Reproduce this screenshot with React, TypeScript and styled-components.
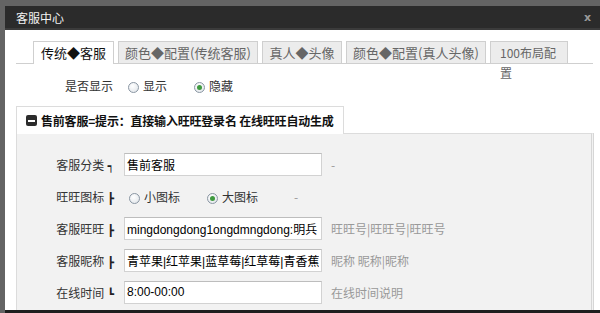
import React from 'react';
import styled, { createGlobalStyle } from 'styled-components';

const GlobalStyle = createGlobalStyle`
	html, body {
		margin: 0;
		padding: 0;
		background: #646464;
		overflow: hidden;
	}
	* {
		box-sizing: border-box;
	}
`;

const cjk = `"Noto Sans CJK SC", "Liberation Sans", sans-serif`;

const Frame = styled.div`
	width: 600px;
	height: 313px;
	padding: 6px 0 0 5px;
	background: #646464;
	display: flex;
	flex-direction: column;
	font-family: ${cjk};
	font-size: 12px;
`;

const TitleBar = styled.div`
	height: 24px;
	flex: none;
	display: flex;
	align-items: center;
	justify-content: space-between;
	padding: 0 9px 0 11px;
	background: #2b2b2b;
	border-bottom: 2px solid #3b3b3b;
	color: #f2f2f2;
	font-size: 12px;
`;

const Close = styled.span`
	color: #9a9a9a;
	font-family: 'DejaVu Sans', sans-serif;
	font-size: 11px;
	font-weight: bold;
`;

const Body = styled.div`
	flex: 1;
	display: flex;
	flex-direction: column;
	padding: 11px 7px 0 11px;
	background: #fff;
	border-bottom: 3px solid #1e1e1e;
	min-height: 0;
`;

const TabBar = styled.div`
	height: 23px;
	flex: none;
	display: flex;
	align-items: flex-end;
	gap: 4px;
	padding-left: 17px;
	border-bottom: 1px solid #cfcfcf;
`;

const Tab = styled.div<{ $active?: boolean; $width: number; $compact?: boolean }>`
	width: ${(p): number => p.$width}px;
	height: ${(p): string => (p.$active ? '23px' : '22px')};
	margin-bottom: ${(p): string => (p.$active ? '-1px' : '0')};
	padding: ${(p): string => (p.$compact ? '1px 10px 0 9px' : '1px 0 0')};
	border: 1px solid #cfcfcf;
	border-bottom: none;
	background: ${(p): string => (p.$active ? '#fff' : '#ececec')};
	color: ${(p): string => (p.$active ? '#111' : '#666')};
	font-size: ${(p): string => (p.$compact ? '12px' : '13px')};
	line-height: 20px;
	text-align: ${(p): string => (p.$compact ? 'left' : 'center')};
	white-space: ${(p): string => (p.$compact ? 'normal' : 'nowrap')};
	word-break: break-all;
	overflow: visible;
`;

const Row = styled.div<{ $top?: boolean }>`
	height: ${(p): string => (p.$top ? '24px' : '32px')};
	margin-top: ${(p): string => (p.$top ? '9px' : '0')};
	display: flex;
	align-items: center;
	flex: none;
`;

const Label = styled.span`
	width: 97px;
	flex: none;
	text-align: right;
	color: #333;
`;

const Mark = styled.span`
	font-family: 'DejaVu Sans', sans-serif;
	font-size: 11px;
	margin-left: 3px;
	color: #222;
`;

const Field = styled.input`
	width: 198px;
	height: 23px;
	margin-left: 10px;
	padding: 0 2px;
	border: 1px solid #d2d2d2;
	border-top-color: #bdbdbd;
	background: #fff;
	color: #000;
	font-family: 'Liberation Sans', 'Noto Sans CJK SC', sans-serif;
	font-size: 12px;
	outline: none;
`;

const Hint = styled.span`
	margin-left: 9px;
	color: #999;
	white-space: nowrap;
`;

const Radios = styled.div`
	display: flex;
	align-items: center;
	gap: 27px;
	margin-left: 15px;
`;

const Option = styled.label`
	display: flex;
	align-items: center;
	gap: 4px;
	color: #333;
`;

const Radio = styled.span<{ $checked?: boolean }>`
	width: 11px;
	height: 11px;
	margin-top: 5px;
	border-radius: 50%;
	border: 1px solid #8a96a3;
	background: radial-gradient(circle at 40% 35%, #fff 0%, #e4e8ec 80%);
	display: flex;
	align-items: center;
	justify-content: center;

	&::after {
		content: '';
		width: 5px;
		height: 5px;
		border-radius: 50%;
		background: #3f9a3f;
		display: ${(p): string => (p.$checked ? 'block' : 'none')};
	}
`;

const Section = styled.div`
	flex: 1;
	display: flex;
	flex-direction: column;
	margin-top: 9px;
	width: 578px;
	min-height: 0;
`;

const SectionHead = styled.div`
	width: 328px;
	height: 28px;
	flex: none;
	margin-bottom: -1px;
	position: relative;
	z-index: 1;
	display: flex;
	align-items: center;
	gap: 4px;
	padding-left: 9px;
	border: 1px solid #dcdcdc;
	border-bottom: none;
	background: #fff;
	color: #111;
	font-weight: bold;
	white-space: nowrap;
	letter-spacing: -0.2px;
`;

const Collapse = styled.span`
	width: 11px;
	height: 11px;
	border-radius: 2px;
	background: #2c2c2c;
	display: flex;
	align-items: center;
	justify-content: center;

	&::after {
		content: '';
		width: 7px;
		height: 2px;
		background: #fff;
	}
`;

const Panel = styled.div`
	flex: 1;
	padding-top: 14px;
	background: #f2f2f2;
	border: 1px solid #dcdcdc;
	border-right: 3px double #d6d6d6;
	border-bottom: none;
`;

type Field = { label: string; mark: string; value: string; hint: string };

const fields: Field[] = [
	{ label: '客服旺旺', mark: '┣', value: 'mingdongdong1ongdmngdong:明兵 mingdong', hint: '旺旺号|旺旺号|旺旺号' },
	{ label: '客服昵称', mark: '┣', value: '青苹果|红苹果|蓝草莓|红草莓|青香蕉|青苹果', hint: '昵称 昵称|昵称' },
	{ label: '在线时间', mark: '┗', value: '8:00-00:00', hint: '在线时间说明' },
];

const tabs = [
	{ title: '传统◆客服', width: 81 },
	{ title: '颜色◆配置(传统客服)', width: 140 },
	{ title: '真人◆头像', width: 80 },
	{ title: '颜色◆配置(真人头像)', width: 140 },
];

const App: React.FC = () => {
	return (
		<Frame>
			<GlobalStyle />
			<TitleBar>
				<span>客服中心</span>
				<Close>x</Close>
			</TitleBar>
			<Body>
				<TabBar>
					{tabs.map((t, i) => (
						<Tab key={t.title} $active={i === 0} $width={t.width}>
							{t.title}
						</Tab>
					))}
					<Tab $width={78} $compact>
						100布局配置
					</Tab>
				</TabBar>

				<Row $top>
					<Label>是否显示</Label>
					<Radios>
						<Option>
							<Radio />
							显示
						</Option>
						<Option>
							<Radio $checked />
							隐藏
						</Option>
					</Radios>
				</Row>

				<Section>
					<SectionHead>
						<Collapse />
						售前客服=提示：直接输入旺旺登录名 在线旺旺自动生成
					</SectionHead>
					<Panel>
						<Row>
							<Label>
								客服分类<Mark>┑</Mark>
							</Label>
							<Field readOnly defaultValue="售前客服" />
							<Hint>-</Hint>
						</Row>
						<Row>
							<Label>
								旺旺图标<Mark>┣</Mark>
							</Label>
							<Radios>
								<Option>
									<Radio />
									小图标
								</Option>
								<Option>
									<Radio $checked />
									大图标
								</Option>
								<Hint>-</Hint>
							</Radios>
						</Row>
						{fields.map((f) => (
							<Row key={f.label}>
								<Label>
									{f.label}
									<Mark>{f.mark}</Mark>
								</Label>
								<Field readOnly defaultValue={f.value} />
								<Hint>{f.hint}</Hint>
							</Row>
						))}
					</Panel>
				</Section>
			</Body>
		</Frame>
	);
};

export default App;
